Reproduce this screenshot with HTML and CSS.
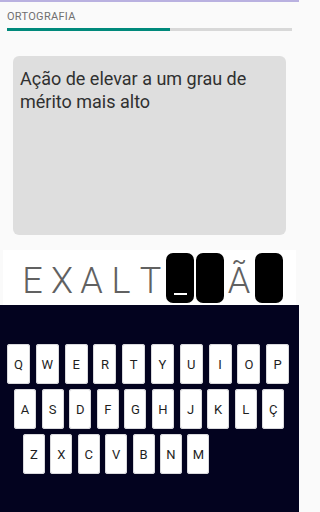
FILE: index.html
```html
<!DOCTYPE html>
<html lang="pt">
<head>
<meta charset="utf-8">
<link rel="stylesheet" href="styles.css">
</head>
<body>
<div class="app">
  <div class="topline"></div>
  <header class="header">
    <div class="title">ORTOGRAFIA</div>
    <div class="progress"><div class="progress-fill" style="width:57.2%"></div></div>
  </header>
  <section class="card">
    <p class="definition">Ação de elevar a um grau de mérito mais alto</p>
  </section>
  <div class="word">
    <span class="slot"><span class="letter">E</span></span>
    <span class="slot"><span class="letter">X</span></span>
    <span class="slot"><span class="letter">A</span></span>
    <span class="slot"><span class="letter">L</span></span>
    <span class="slot"><span class="letter">T</span></span>
    <span class="slot"><span class="tile active"><span class="cursor"></span></span></span>
    <span class="slot"><span class="tile"></span></span>
    <span class="slot"><span class="letter">Ã</span></span>
    <span class="slot"><span class="tile"></span></span>
  </div>
  <div class="keyboard">
    <div class="krow row1">
      <span class="key">Q</span><span class="key">W</span><span class="key">E</span><span class="key">R</span><span class="key">T</span><span class="key">Y</span><span class="key">U</span><span class="key">I</span><span class="key">O</span><span class="key">P</span>
    </div>
    <div class="krow row2">
      <span class="key">A</span><span class="key">S</span><span class="key">D</span><span class="key">F</span><span class="key">G</span><span class="key">H</span><span class="key">J</span><span class="key">K</span><span class="key">L</span><span class="key">Ç</span>
    </div>
    <div class="krow row3">
      <span class="key">Z</span><span class="key">X</span><span class="key">C</span><span class="key">V</span><span class="key">B</span><span class="key">N</span><span class="key">M</span>
    </div>
  </div>
</div>
</body>
</html>
```
FILE: styles.css
```css
html, body {
  margin: 0;
  padding: 0;
  height: 100%;
}
body {
  background: #fafafa;
  font-family: Roboto, "Liberation Sans", sans-serif;
}
.app {
  display: flex;
  flex-direction: column;
  width: 299px;
  height: 512px;
  overflow: hidden;
  background: #fafafa;
}
.topline {
  height: 2px;
  background: #b9b1e0;
}
.header {
  padding: 8px 7px 0;
}
.title {
  font-size: 11px;
  line-height: 14px;
  color: #707070;
  letter-spacing: 0.3px;
}
.progress {
  margin-top: 4px;
  height: 3px;
  background: #d8d8d8;
}
.progress-fill {
  height: 100%;
  background: #00897b;
}
.card {
  margin: 25px 13px 0;
  height: 179px;
  background: #dedede;
  border-radius: 6px;
  padding: 11px 7px 0;
  box-sizing: border-box;
}
.definition {
  margin: 0;
  font-size: 18px;
  line-height: 23px;
  color: #303030;
}
.word {
  margin: 15px 3px 0;
  height: 55px;
  background: #ffffff;
  display: flex;
  justify-content: center;
  align-items: center;
  padding-left: 2px;
}
.slot {
  width: 29.5px;
  height: 50px;
  display: flex;
  justify-content: center;
  align-items: flex-start;
}
.letter {
  font-size: 36px;
  font-weight: 300;
  line-height: 50px;
  padding-top: 3px;
  color: #616161;
}
.tile {
  width: 28px;
  height: 50px;
  background: #000;
  border-radius: 7px;
  display: flex;
  justify-content: center;
  align-items: flex-end;
}
.cursor {
  width: 13px;
  height: 2px;
  background: #fff;
  margin-bottom: 8px;
}
.keyboard {
  flex: 1;
  background: #03031f;
  padding-top: 39px;
  display: flex;
  flex-direction: column;
  gap: 5px;
}
.krow {
  display: flex;
  height: 40px;
}
.row1 {
  padding-left: 7px;
  gap: 5.8px;
}
.row2 {
  padding-left: 14px;
  gap: 5.6px;
}
.row3 {
  padding-left: 23px;
  gap: 5.4px;
}
.key {
  width: 22px;
  height: 40px;
  background: #fff;
  border-radius: 3px;
  box-shadow: inset 0 0 0 1px #d9d9dc;
  display: flex;
  align-items: center;
  justify-content: center;
  font-size: 13px;
  color: #1e1e1e;
}
.row1 .key {
  width: 23px;
}
```
